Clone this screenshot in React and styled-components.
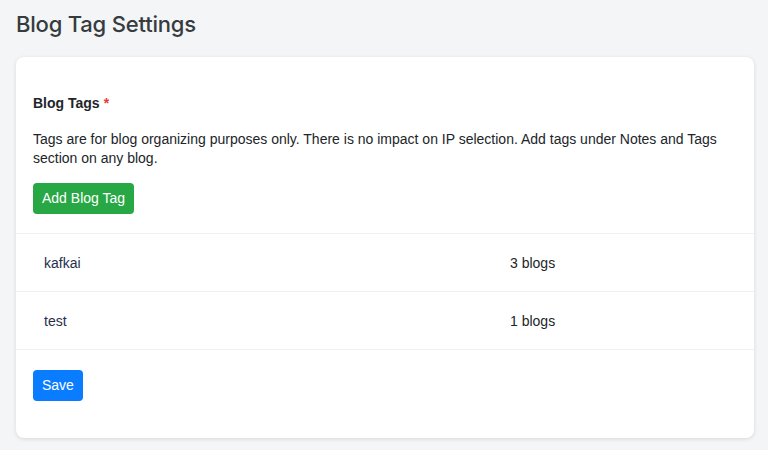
import React from "react";
import styled, { createGlobalStyle } from "styled-components";

const GlobalStyle = createGlobalStyle`
    html, body {
        margin: 0;
        padding: 0;
        background-color: #f4f5f6;
        font-family: "Liberation Sans", Arial, sans-serif;
        color: #212529;
    }
`;

const Page = styled.div`
    padding: 8px 14px 12px 16px;
    min-height: 450px;
    box-sizing: border-box;
`;

const Title = styled.h1`
    font-family: Inter, "Liberation Sans", sans-serif;
    font-size: 22px;
    font-weight: 500;
    color: #363b40;
    margin: 0 0 17px;
    line-height: 32px;
    letter-spacing: -0.2px;
`;

const Card = styled.div`
    background-color: #fff;
    border-radius: 8px;
    box-shadow: 0 1px 4px rgba(0, 0, 0, 0.12);
    padding-bottom: 37px;
`;

const Section = styled.div`
    padding: 37px 17px 19px;
`;

const Label = styled.div`
    font-size: 14px;
    font-weight: 700;
    line-height: 18px;
    margin-bottom: 18px;
`;

const Required = styled.span`
    color: #e53935;
    margin-left: 4px;
`;

const Help = styled.p`
    font-size: 14px;
    line-height: 19px;
    margin: 0 0 15px;
    max-width: 690px;
`;

const Button = styled.button`
    font-family: inherit;
    font-size: 14px;
    line-height: 19px;
    color: #fff;
    border: none;
    border-radius: 4px;
    padding: 6px 9px;
    cursor: pointer;
    background-color: ${({ variant }) => (variant === "success" ? "#28a745" : "#0a7cff")};
`;

const TagList = styled.div`
    border-top: 1px solid #eef0f2;
`;

const Row = styled.div`
    display: grid;
    grid-template-columns: 466px 1fr;
    align-items: center;
    height: 57px;
    padding-left: 28px;
    border-bottom: 1px solid #eef0f2;
    font-size: 14px;
`;

const TagName = styled.span`
    color: #1f2f4d;
`;

const Count = styled.span`
    color: #212529;
`;

const Footer = styled.div`
    padding: 20px 17px 0;
`;

const tags = [
    { name: "kafkai", count: 3 },
    { name: "test", count: 1 },
];

const App = () => {
    return (
        <>
            <GlobalStyle />
            <Page>
                <Title>Blog Tag Settings</Title>
                <Card>
                    <Section>
                        <Label>
                            Blog Tags<Required>*</Required>
                        </Label>
                        <Help>
                            Tags are for blog organizing purposes only. There is no impact on IP
                            selection. Add tags under Notes and Tags section on any blog.
                        </Help>
                        <Button variant="success">Add Blog Tag</Button>
                    </Section>
                    <TagList>
                        {tags.map((tag) => (
                            <Row key={tag.name}>
                                <TagName>{tag.name}</TagName>
                                <Count>{tag.count} blogs</Count>
                            </Row>
                        ))}
                    </TagList>
                    <Footer>
                        <Button>Save</Button>
                    </Footer>
                </Card>
            </Page>
        </>
    );
};

export default App;
